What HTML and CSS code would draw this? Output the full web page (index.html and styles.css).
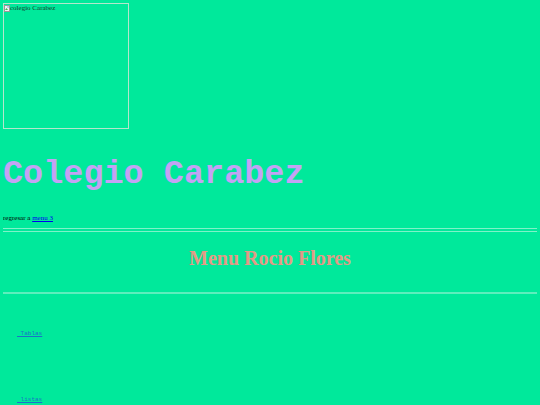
FILE: index.html
```html
<!DOCTYPE html>
<html>
<head>
<meta charset="utf-8">
<title>Colegio Carabez</title>
<link rel="stylesheet" href="styles.css">
</head>
<body>
<div class="logo">
  <span class="alt"><svg class="broken" width="6" height="7" viewBox="0 0 6 7"><rect x="0.5" y="0.5" width="5" height="6" fill="#f4f4f4" stroke="#9a9a9a" stroke-width="1"/><path d="M1 5 L2.5 3 L4 5 Z" fill="#4caf50"/><circle cx="4" cy="2" r="0.8" fill="#6aa0e0"/></svg>colegio Carabez</span>
</div>
<h1 class="title">Colegio Carabez</h1>
<p class="back">regresar a <a href="#">menu 3</a></p>
<div class="double-rule"></div>
<h2 class="menu-title">Menu Rocio Flores</h2>
<div class="rule"></div>
<ul class="links">
  <li class="link-item first"><a href="#">&nbsp;Tablas</a></li>
  <li class="link-item"><a href="#">&nbsp;listas</a></li>
</ul>
</body>
</html>
```
FILE: styles.css
```css
html, body {
  background: #00e99b;
}
body {
  margin: 3px;
  font-family: "Liberation Serif", "Times New Roman", serif;
  font-size: 7px;
  color: #000;
}
.logo {
  width: 124px;
  height: 124px;
  border: 1px solid #b4e6cc;
}
.alt {
  display: flex;
  align-items: center;
  font-size: 7px;
  line-height: 8px;
  color: #1a3a2a;
}
.broken {
  display: block;
}
.title {
  margin: 26px 0 0;
  font-family: "Liberation Mono", "Courier New", monospace;
  font-size: 33.5px;
  line-height: 38px;
  font-weight: bold;
  color: #c4a2f4;
}
.back {
  margin: 21px 0 0;
  line-height: 8px;
}
.back a {
  color: #0000ee;
}
.double-rule {
  margin-top: 6px;
  height: 2px;
  border-top: 1px solid #7ff2c8;
  border-bottom: 1px solid #7ff2c8;
}
.menu-title {
  margin: 15px 0 0;
  text-align: center;
  font-size: 20px;
  line-height: 23px;
  font-weight: bold;
  color: #e39a86;
}
.rule {
  margin-top: 22px;
  height: 2px;
  background: #5eeebd;
}
.links {
  list-style: none;
  margin: 0;
  padding: 0 0 0 14px;
  font-family: "Liberation Mono", "Courier New", monospace;
  font-size: 6px;
  line-height: 7px;
}
.link-item {
  margin-top: 59px;
}
.link-item.first {
  margin-top: 36px;
}
.link-item a {
  color: #1a72c8;
}
```
